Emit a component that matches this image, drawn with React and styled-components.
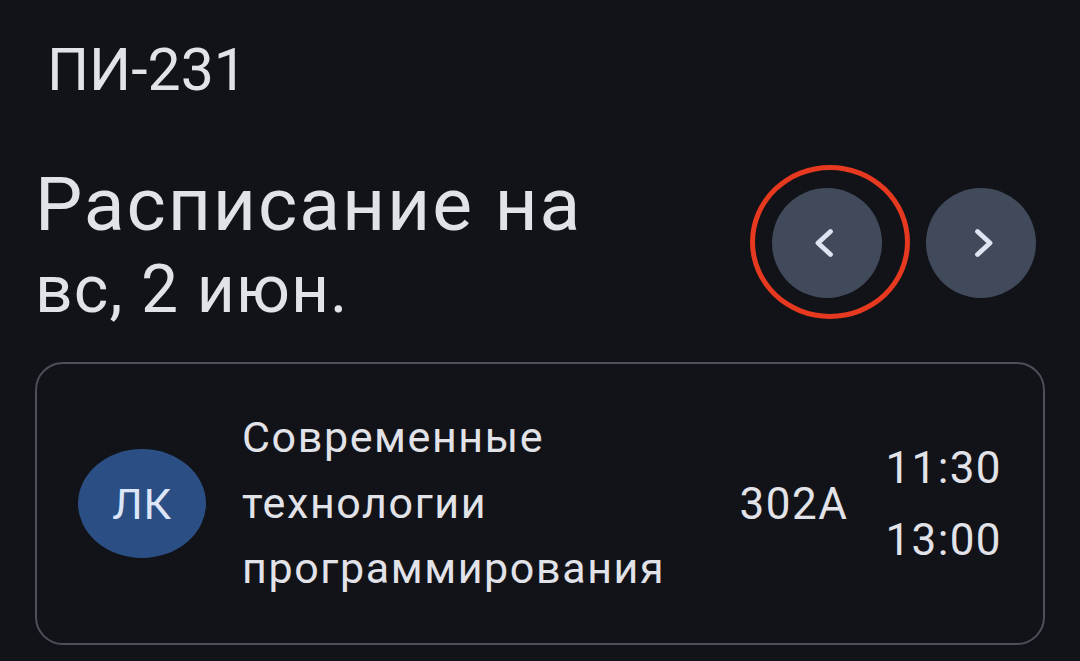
import styled, { createGlobalStyle } from "styled-components";

const GlobalStyle = createGlobalStyle`
  html, body {
    margin: 0;
    padding: 0;
    background: #111318;
  }
  body {
    font-family: Roboto, "Noto Sans", sans-serif;
    color: #e2e2e9;
  }
`;

const Page = styled.main`
  width: 1080px;
  height: 661px;
  box-sizing: border-box;
  padding: 0 35px;
  overflow: hidden;
  background: #111318;
`;

const Group = styled.div`
  padding: 34px 0 0 12px;
  font-size: 59px;
  line-height: 72px;
`;

const Header = styled.header`
  display: flex;
  align-items: center;
  justify-content: space-between;
  margin-top: 52px;
  padding: 0 9px 0 0;
`;

const Title = styled.h1`
  margin: 0;
  font-weight: 400;
`;

const TitleLine = styled.span`
  display: block;
  font-size: ${(p) => p.size}px;
  line-height: ${(p) => p.lh}px;
  letter-spacing: ${(p) => p.ls}px;
`;

const Nav = styled.div`
  display: flex;
  gap: 44px;
`;

const NavButton = styled.button`
  position: relative;
  width: 110px;
  height: 110px;
  border: none;
  border-radius: 50%;
  background: #414a5a;
  color: #dfe4f2;
  display: flex;
  align-items: center;
  justify-content: center;
  padding: 0;
  cursor: pointer;

  ${(p) =>
    p.highlight &&
    `
    &::after {
      content: "";
      position: absolute;
      left: -22px;
      top: -23px;
      width: 150px;
      height: 144px;
      border: 5px solid #e6391f;
      border-radius: 50%;
    }
  `}
`;

const Card = styled.section`
  margin-top: 34px;
  height: 283px;
  box-sizing: border-box;
  border: 2.5px solid #4d5059;
  border-radius: 28px;
  display: flex;
  align-items: center;
  padding: 0 41px 0 41px;
`;

const Avatar = styled.div`
  flex: none;
  width: 128px;
  height: 109px;
  border-radius: 50%;
  background: #2b4f84;
  display: flex;
  align-items: center;
  justify-content: center;
  font-size: 43px;
  letter-spacing: 0.8px;
  color: #dde6f8;
  margin-right: 36px;
`;

const Subject = styled.div`
  flex: 1;
  font-size: 43px;
  line-height: 65.5px;
  letter-spacing: 1.6px;
`;

const Room = styled.div`
  font-size: 44px;
  margin-right: 37px;
  letter-spacing: 1.5px;
`;

const Times = styled.div`
  display: flex;
  flex-direction: column;
  gap: 26px;
  font-size: 44px;
  line-height: 46px;
  letter-spacing: 1.4px;
`;

const Chevron = ({ dir }) => (
  <svg width="30" height="30" viewBox="0 0 30 30" fill="none">
    <polyline
      points={dir === "left" ? "18.5,3.5 6,15 18.5,26.5" : "11.5,3.5 24,15 11.5,26.5"}
      stroke="currentColor"
      strokeWidth="4.8"
      strokeLinecap="round"
      strokeLinejoin="round"
    />
  </svg>
);

export default function App() {
  return (
    <>
      <GlobalStyle />
      <Page>
        <Group>ПИ-231</Group>
        <Header>
          <Title>
            <TitleLine size={75} lh={93} ls={1.9}>
              Расписание на
            </TitleLine>
            <TitleLine size={66} lh={77} ls={1.1}>
              вс, 2 июн.
            </TitleLine>
          </Title>
          <Nav>
            <NavButton highlight aria-label="Предыдущий день">
              <Chevron dir="left" />
            </NavButton>
            <NavButton aria-label="Следующий день">
              <Chevron dir="right" />
            </NavButton>
          </Nav>
        </Header>
        <Card>
          <Avatar>ЛК</Avatar>
          <Subject>
            Современные
            <br />
            технологии
            <br />
            программирования
          </Subject>
          <Room>302A</Room>
          <Times>
            <span>11:30</span>
            <span>13:00</span>
          </Times>
        </Card>
      </Page>
    </>
  );
}
